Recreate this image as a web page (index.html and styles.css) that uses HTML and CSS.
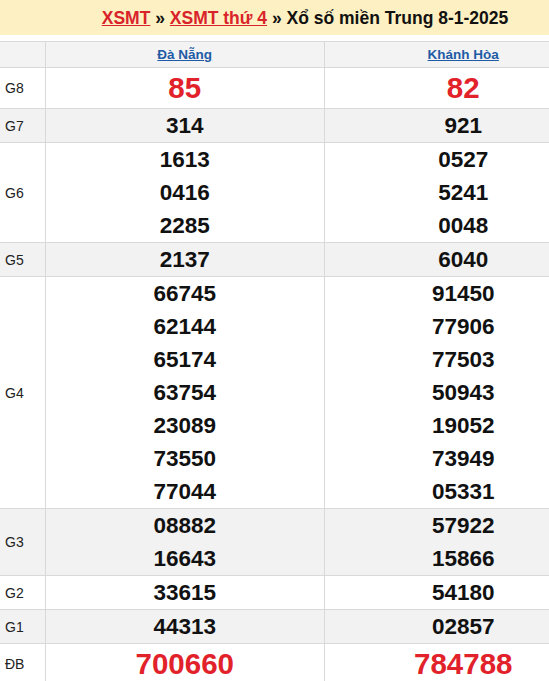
FILE: index.html
```html
<!DOCTYPE html>
<html lang="vi">
<head>
<meta charset="utf-8">
<title>XSMT 8-1-2025</title>
<link rel="stylesheet" href="styles.css">
</head>
<body>
<div class="page">
  <div class="title-bar">
    <h2 class="title"><a href="#" class="crumb">XSMT</a> » <a href="#" class="crumb">XSMT thứ 4</a> » Xổ số miền Trung 8-1-2025</h2>
  </div>
  <table class="results">
    <thead>
      <tr class="head">
        <th class="label"></th>
        <th class="prov"><a href="#">Đà Nẵng</a></th>
        <th class="prov"><a href="#">Khánh Hòa</a></th>
      </tr>
    </thead>
    <tbody>
      <tr>
        <td class="label">G8</td>
        <td class="nums big"><div>85</div></td>
        <td class="nums big"><div>82</div></td>
      </tr>
      <tr class="alt">
        <td class="label">G7</td>
        <td class="nums"><div>314</div></td>
        <td class="nums"><div>921</div></td>
      </tr>
      <tr>
        <td class="label">G6</td>
        <td class="nums"><div>1613</div><div>0416</div><div>2285</div></td>
        <td class="nums"><div>0527</div><div>5241</div><div>0048</div></td>
      </tr>
      <tr class="alt">
        <td class="label">G5</td>
        <td class="nums"><div>2137</div></td>
        <td class="nums"><div>6040</div></td>
      </tr>
      <tr>
        <td class="label">G4</td>
        <td class="nums"><div>66745</div><div>62144</div><div>65174</div><div>63754</div><div>23089</div><div>73550</div><div>77044</div></td>
        <td class="nums"><div>91450</div><div>77906</div><div>77503</div><div>50943</div><div>19052</div><div>73949</div><div>05331</div></td>
      </tr>
      <tr class="alt">
        <td class="label">G3</td>
        <td class="nums"><div>08882</div><div>16643</div></td>
        <td class="nums"><div>57922</div><div>15866</div></td>
      </tr>
      <tr>
        <td class="label">G2</td>
        <td class="nums"><div>33615</div></td>
        <td class="nums"><div>54180</div></td>
      </tr>
      <tr class="alt">
        <td class="label">G1</td>
        <td class="nums"><div>44313</div></td>
        <td class="nums"><div>02857</div></td>
      </tr>
      <tr>
        <td class="label">ĐB</td>
        <td class="nums big"><div>700660</div></td>
        <td class="nums big"><div>784788</div></td>
      </tr>
    </tbody>
  </table>
</div>
</body>
</html>
```

FILE: styles.css
```css
html, body {
  margin: 0;
  padding: 0;
  overflow: hidden;
  background: #ffffff;
}

body {
  font-family: "Liberation Sans", Arial, sans-serif;
  color: #000;
}

.page {
  width: 610px;
}

.title-bar {
  background: #fdf0c2;
  height: 35px;
  display: flex;
  align-items: center;
  justify-content: center;
  margin-bottom: 6px;
}

.title {
  margin: 0;
  font-size: 17.5px;
  font-weight: bold;
  color: #111;
  line-height: 20px;
}

.crumb {
  color: #d9232a;
  text-decoration: underline;
}

.results {
  width: 603px;
  border-collapse: collapse;
  table-layout: fixed;
}

.results th,
.results td {
  border: 1px solid #d9d9d9;
  padding: 0;
}

.results tr > :first-child {
  border-left: none;
}

.head {
  background: #f3f3f3;
}

.head th {
  height: 25px;
}

.label {
  width: 40px;
  text-align: left;
  padding-left: 5px !important;
  font-size: 14px;
  font-weight: normal;
  color: #222;
}

.prov {
  text-align: center;
  font-size: 13.5px;
  font-weight: bold;
}

.prov a {
  color: #1f5ba5;
  text-decoration: underline;
}

.alt {
  background: #f2f2f2;
}

.nums {
  text-align: center;
  font-size: 22.5px;
  font-weight: bold;
  line-height: 33px;
  color: #111;
}

.nums.big {
  font-size: 29.5px;
  line-height: 40px;
  color: #e2222a;
}
```
